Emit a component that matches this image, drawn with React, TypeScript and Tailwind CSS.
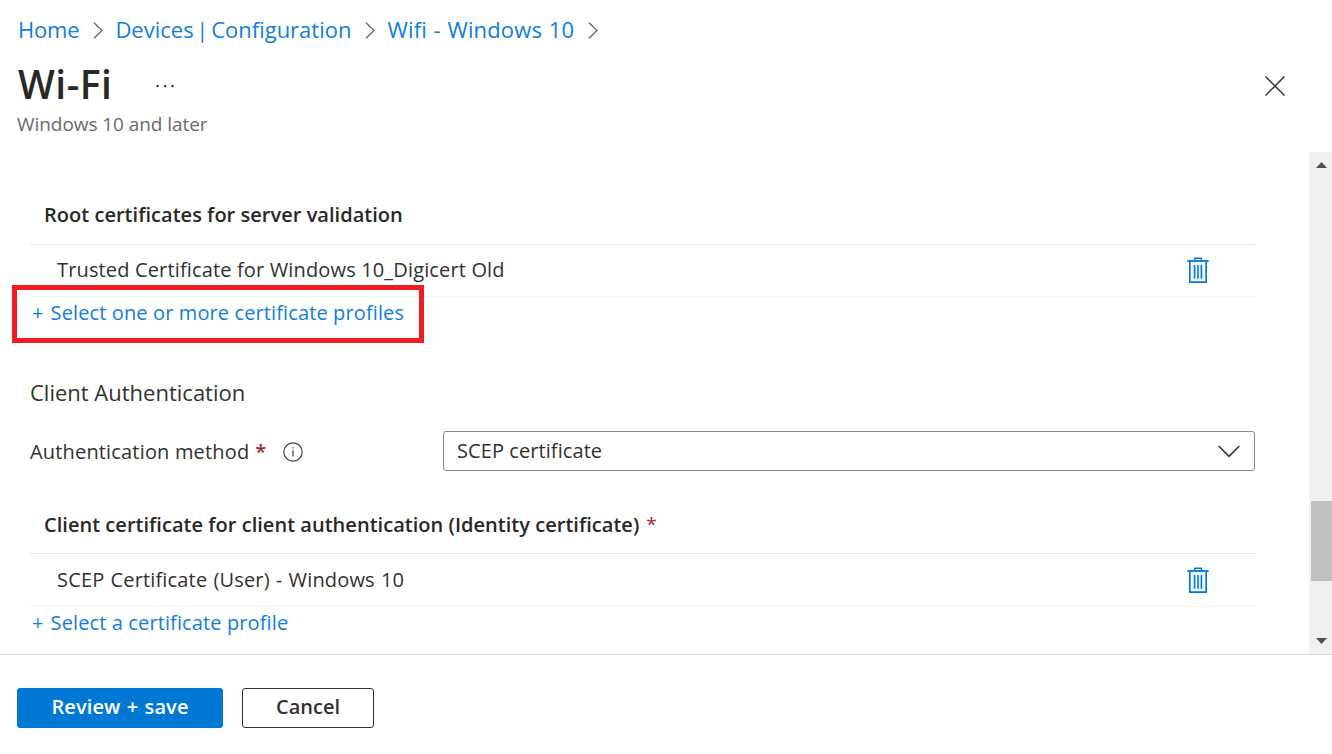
import React from 'react';

interface CertificateListProps {
  title: string;
  required?: boolean;
  item: string;
  titleClass: string;
  itemClass: string;
  rowClass: string;
  children: React.ReactNode;
}

const breadcrumbs = [
  { label: 'Home', className: 'pl-px tracking-[-0.2px]' },
  { label: 'Devices | Configuration', className: '[word-spacing:-3px]' },
  { label: 'Wifi - Windows 10', className: 'tracking-[0.15px] [word-spacing:0.8px]' },
];

const BreadcrumbArrow = () => (
  <svg width="10" height="17" viewBox="0 0 10 17" fill="none" stroke="#605e5c" strokeWidth="1.2">
    <path d="M1 0.8 9 8.5 1 16.2" />
  </svg>
);

const TrashIcon = () => (
  <svg width="22" height="27" viewBox="0 0 22 27" fill="none" stroke="#0078d4">
    <path d="M2.8 4.5V25.2H19.2V4.5" strokeWidth="1.7" strokeLinejoin="round" fill="#f2f9fe" />
    <path d="M0.3 4H21.7" strokeWidth="1.8" />
    <path d="M7.7 3.5V1.2H14.3V3.5" strokeWidth="1.5" strokeLinejoin="round" />
    <path d="M7.6 8V21.7M11 8V21.7M14.4 8V21.7" strokeWidth="1.6" />
  </svg>
);

const InfoIcon = () => (
  <svg width="20" height="20" viewBox="0 0 20 20" fill="none" stroke="#484644">
    <circle cx="10" cy="10" r="9.2" strokeWidth="1.2" />
    <path d="M10 8.2V14.6" strokeWidth="1.3" />
    <path d="M10 5.2V6.6" strokeWidth="1.3" />
  </svg>
);

const AddLink: React.FC<{ label: string }> = ({ label }) => (
  <a href="#" className="flex items-center gap-[7px] pl-[2px] tracking-[0.12px] text-[#0f7fd8]">
    <span>+</span>
    <span>{label}</span>
  </a>
);

const CertificateList: React.FC<CertificateListProps> = ({ title, required, item, titleClass, itemClass, rowClass, children }) => (
  <section>
    <h3 className={`flex items-center border-b border-[#e9e9e9] pl-[14px] text-[20px] font-semibold tracking-[0.03px] text-[#292827] ${titleClass}`}>
      {title}
      {required && <span className="ml-[7px] text-[19px] font-medium text-[#a4262c]">*</span>}
    </h3>
    <div className={`flex items-center justify-between border-b border-[#f0f0f0] pr-[46px] pl-[27px] ${rowClass}`}>
      <span className={itemClass}>{item}</span>
      <button type="button" aria-label="Delete">
        <TrashIcon />
      </button>
    </div>
    {children}
  </section>
);

export default function App() {
  return (
    <div className="flex h-[754px] w-[1332px] flex-col overflow-hidden bg-white font-['Open_Sans',sans-serif] text-[20px] whitespace-nowrap text-[#323130]">
      <header className="h-[152px] shrink-0 pl-[17px]">
        <nav className="flex h-[60px] items-center text-[22px] text-[#0f7fd8]">
          {breadcrumbs.map(crumb => (
            <div key={crumb.label} className="flex items-center">
              <a href="#" className={`pb-[2px] ${crumb.className}`}>{crumb.label}</a>
              <span className="mr-3 ml-[14px]">
                <BreadcrumbArrow />
              </span>
            </div>
          ))}
        </nav>
        <div className="flex h-[52px] items-center justify-between pr-[47px]">
          <div className="flex items-center">
            <h1 className="w-[139px] pb-1 pl-px text-[39px] leading-[48px] font-semibold tracking-[0.5px] text-[#292827]">Wi-Fi</h1>
            <svg width="18" height="4" viewBox="0 0 18 4" fill="#323130">
              <circle cx="1.5" cy="2" r="1.2" />
              <circle cx="9.2" cy="2" r="1.2" />
              <circle cx="16.5" cy="2" r="1.2" />
            </svg>
          </div>
          <button type="button" aria-label="Close">
            <svg width="20" height="20" viewBox="0 0 20 20" stroke="#323130" strokeWidth="1.5">
              <path d="M0.5 0.5 19.5 19.5M19.5 0.5 0.5 19.5" />
            </svg>
          </button>
        </div>
        <p className="text-[19px] leading-[24px] tracking-[-0.06px] text-[#6b6968]">Windows 10 and later</p>
      </header>

      <div className="flex h-[502px] shrink-0">
        <main className="w-[1309px] pt-[33px] pr-[54px] pl-[30px]">
          <CertificateList
            title="Root certificates for server validation"
            item="Trusted Certificate for Windows 10_Digicert Old"
            titleClass="h-[60px]"
            itemClass="pb-[2px] tracking-[0.15px]"
            rowClass="h-[52px]"
          >
            <div className="relative flex h-8 items-center">
              <AddLink label="Select one or more certificate profiles" />
              <div className="absolute top-[-12px] left-[-18px] h-[58px] w-[412px] border-[5px] border-[#ef1c24]" />
            </div>
          </CertificateList>

          <h2 className="mt-[47px] h-[33px] text-[22px] leading-8">Client Authentication</h2>

          <div className="mt-[22px] flex h-10 items-center">
            <label className="flex w-[413px] items-center pt-px">
              <span className="tracking-[0.17px]">Authentication method</span>
              <span className="mr-[17px] ml-[6px] font-semibold text-[#a4262c]">*</span>
              <InfoIcon />
            </label>
            <div className="flex h-10 w-[812px] items-center justify-between rounded-[3px] border border-[#8a8886] pr-[14px] pl-[13px]">
              <span className="tracking-[0.08px]">SCEP certificate</span>
              <svg width="22" height="13" viewBox="0 0 22 13" fill="none" stroke="#323130" strokeWidth="1.6">
                <path d="M0.7 1 11 11.3 21.3 1" />
              </svg>
            </div>
          </div>

          <div className="mt-[25px]">
            <CertificateList
              title="Client certificate for client authentication (Identity certificate)"
              required
              item="SCEP Certificate (User) - Windows 10"
              titleClass="h-[58px]"
              itemClass="tracking-[0.16px] [word-spacing:0.8px]"
              rowClass="h-[53px]"
            >
              <div className="flex h-8 items-center">
                <AddLink label="Select a certificate profile" />
              </div>
            </CertificateList>
          </div>
        </main>

        <div className="flex w-[23px] flex-col items-center bg-[#f0f0f0] pt-[10px] pb-[10px] pl-[2px]">
          <svg width="11" height="6" viewBox="0 0 11 6" fill="#505050">
            <path d="M5.5 0 11 6H0z" />
          </svg>
          <div className="mt-[333px] h-20 w-full bg-[#c1c1c1]" />
          <svg className="mt-auto" width="11" height="6" viewBox="0 0 11 6" fill="#505050">
            <path d="M0 0H11L5.5 6z" />
          </svg>
        </div>
      </div>

      <footer className="flex h-[100px] gap-[19px] border-t border-[#dcdcdc] pt-[33px] pl-[17px] font-semibold">
        <button type="button" className="h-10 w-[206px] rounded-[3px] bg-[#0078d4] pb-[2px] tracking-[0.1px] text-white [word-spacing:1px]">
          Review + save
        </button>
        <button type="button" className="h-10 w-[132px] rounded-[3px] border border-[#323130] pb-[2px]">Cancel</button>
      </footer>
    </div>
  );
}
